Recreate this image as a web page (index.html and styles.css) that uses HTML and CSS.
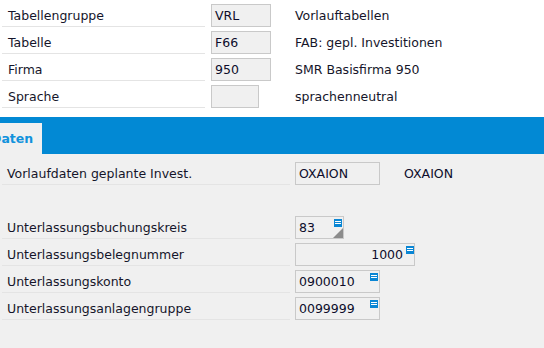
FILE: index.html
```html
<!DOCTYPE html>
<html lang="de">
<head>
<meta charset="utf-8">
<title>Vorlaufdaten</title>
<link rel="stylesheet" href="styles.css">
</head>
<body>
<section class="header">
  <div class="row">
    <div class="label">Tabellengruppe</div>
    <div class="field w60">VRL</div>
    <div class="desc">Vorlauftabellen</div>
  </div>
  <div class="row">
    <div class="label">Tabelle</div>
    <div class="field w60">F66</div>
    <div class="desc">FAB: gepl. Investitionen</div>
  </div>
  <div class="row">
    <div class="label">Firma</div>
    <div class="field w60">950</div>
    <div class="desc">SMR Basisfirma 950</div>
  </div>
  <div class="row">
    <div class="label">Sprache</div>
    <div class="field w48"></div>
    <div class="desc desc-short">sprachenneutral</div>
  </div>
</section>
<nav class="tabbar">
  <div class="tab"><span class="tab-text">Daten</span></div>
</nav>
<section class="content">
  <div class="row">
    <div class="label wide">Vorlaufdaten geplante Invest.</div>
    <div class="field w85">OXAION</div>
    <div class="value">OXAION</div>
  </div>
  <div class="row spacer"></div>
  <div class="row">
    <div class="label wide">Unterlassungsbuchungskreis</div>
    <div class="field w49 has-icon">83<span class="icon"><svg width="8" height="8" viewBox="0 0 8 8"><rect x="0" y="0" width="8" height="8" fill="#0a86d4"/><rect x="1" y="2" width="6" height="1" fill="#fff"/><rect x="1" y="4" width="6" height="1" fill="#fff"/></svg></span><span class="corner"></span></div>
  </div>
  <div class="row">
    <div class="label wide">Unterlassungsbelegnummer</div>
    <div class="field w120 right has-icon">1000<span class="icon icon-edge"><svg width="8" height="8" viewBox="0 0 8 8"><rect x="0" y="0" width="8" height="8" fill="#0a86d4"/><rect x="1" y="2" width="6" height="1" fill="#fff"/><rect x="1" y="4" width="6" height="1" fill="#fff"/></svg></span></div>
  </div>
  <div class="row">
    <div class="label wide">Unterlassungskonto</div>
    <div class="field w85 has-icon">0900010<span class="icon"><svg width="8" height="8" viewBox="0 0 8 8"><rect x="0" y="0" width="8" height="8" fill="#0a86d4"/><rect x="1" y="2" width="6" height="1" fill="#fff"/><rect x="1" y="4" width="6" height="1" fill="#fff"/></svg></span></div>
  </div>
  <div class="row">
    <div class="label wide">Unterlassungsanlagengruppe</div>
    <div class="field w85 has-icon">0099999<span class="icon"><svg width="8" height="8" viewBox="0 0 8 8"><rect x="0" y="0" width="8" height="8" fill="#0a86d4"/><rect x="1" y="2" width="6" height="1" fill="#fff"/><rect x="1" y="4" width="6" height="1" fill="#fff"/></svg></span></div>
  </div>
</section>
</body>
</html>
```
FILE: styles.css
```css
html, body {
  margin: 0;
  padding: 0;
}
body {
  width: 544px;
  height: 348px;
  overflow: hidden;
  background: #f0f0f0;
  font-family: "DejaVu Sans", Verdana, sans-serif;
  font-size: 12.5px;
  color: #15152a;
}
.header {
  background: #ffffff;
  padding: 4px 0 9px 2px;
  display: flex;
  flex-direction: column;
  gap: 4px;
}
.row {
  display: flex;
  align-items: center;
  height: 23px;
}
.label {
  box-sizing: border-box;
  width: 203px;
  height: 23px;
  padding-left: 6px;
  border-bottom: 1px solid #e4e4e4;
  display: flex;
  align-items: center;
  white-space: nowrap;
}
.label.wide {
  width: 288px;
  padding-left: 5px;
}
.field {
  box-sizing: border-box;
  position: relative;
  height: 23px;
  margin-left: 6px;
  padding: 0 3px;
  border: 1px solid #c9c9c9;
  background: #f0f0f0;
  display: flex;
  align-items: center;
  white-space: nowrap;
  color: #0d0d2b;
}
.content .field {
  margin-left: 5px;
}
.w60 { width: 60px; }
.w48 { width: 48px; }
.w85 { width: 85px; }
.w49 { width: 49px; }
.w120 { width: 120px; }
.field.right {
  justify-content: flex-end;
  padding-right: 11px;
}
.desc {
  margin-left: 24px;
  white-space: nowrap;
}
.desc-short {
  margin-left: 36px;
}
.value {
  margin-left: 24px;
  color: #0d0d2b;
}
.icon {
  position: absolute;
  top: 2px;
  right: 1px;
  width: 8px;
  height: 8px;
  line-height: 0;
}
.icon-edge {
  right: 0;
}
.corner {
  position: absolute;
  right: 0;
  bottom: 0;
  width: 0;
  height: 0;
  border-style: solid;
  border-width: 0 0 10px 10px;
  border-color: transparent transparent #8c8c8c transparent;
}
.tabbar {
  height: 37px;
  background: #0289d4;
  display: flex;
  align-items: flex-end;
}
.tab {
  width: 42px;
  height: 31px;
  background: #f0f0f0;
  overflow: hidden;
  display: flex;
  align-items: center;
}
.tab-text {
  margin-left: -9px;
  font-weight: bold;
  color: #1192dc;
  white-space: nowrap;
}
.content {
  padding: 8px 0 0 2px;
  display: flex;
  flex-direction: column;
  gap: 4px;
}
```
